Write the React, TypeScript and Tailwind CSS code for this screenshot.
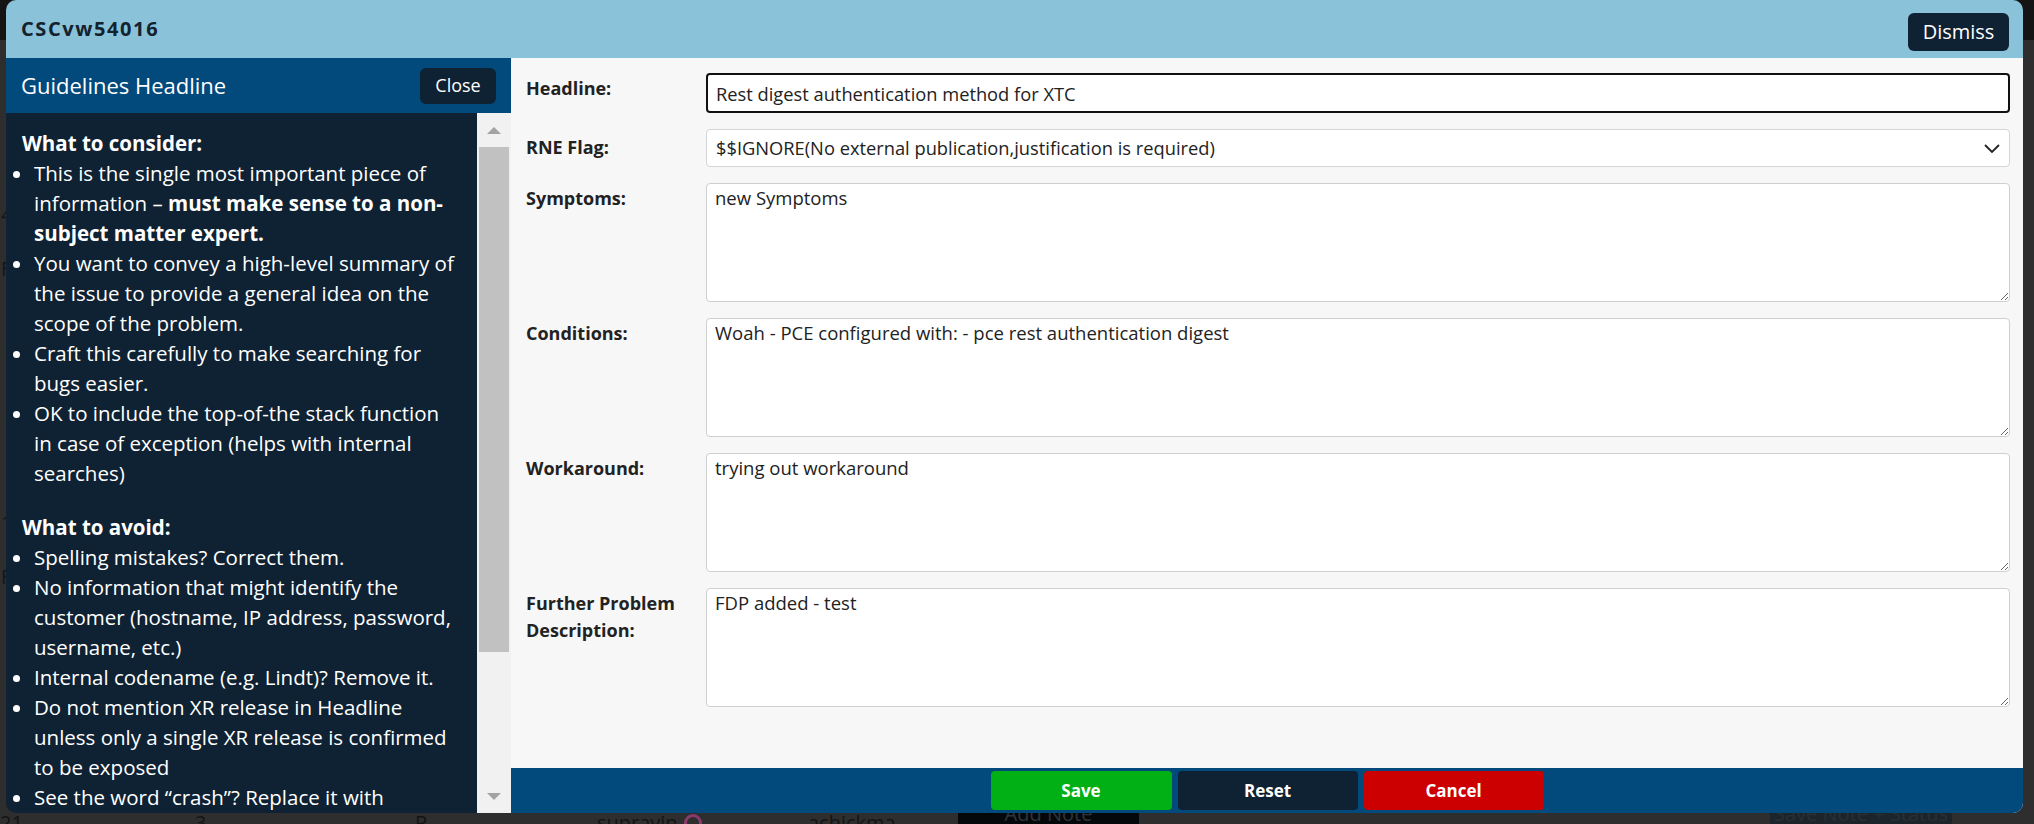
const font = "font-['Open_Sans','Noto_Sans',sans-serif]";

function ScrollArrow({ up }: { up?: boolean }) {
  return (
    <svg width="16" height="9" viewBox="0 0 16 9">
      {up ? <polygon points="8,1 15,8 1,8" fill="#a3a3a3" /> : <polygon points="1,1 15,1 8,8" fill="#a3a3a3" />}
    </svg>
  );
}

function Field({ label, children, pt = "pt-[2px]" }: { label: React.ReactNode; children: React.ReactNode; pt?: string }) {
  return (
    <div className="flex items-start">
      <div className={`w-[180px] shrink-0 text-[18px] leading-[27px] font-bold text-[#222] ${pt}`}>{label}</div>
      <div className="flex-1">{children}</div>
    </div>
  );
}

function Area({ value }: { value: string }) {
  return (
    <textarea
      defaultValue={value}
      className="block w-full h-[119px] bg-white border border-[#cfcfcf] rounded-[4px] px-[8px] py-[2px] text-[18.5px] leading-[24px] text-[#222] outline-none"
    />
  );
}

export default function App() {
  return (
    <div className={`relative w-[2034px] h-[824px] overflow-hidden bg-[#2e2e2e] ${font}`}>
      {/* page behind the overlay */}
      <div className="flex flex-col h-full text-[20px] text-[#151515]">
        <div className="h-[40px] bg-[#141414]" />
        <div className="flex-1 flex flex-col gap-[24px] pt-[160px] pl-[1px]">
          <span>4</span>
          <span>Fi</span>
          <span className="pt-[200px]">1</span>
          <span>Fi</span>
        </div>
        <div className="h-[11px] flex items-start text-[20px] leading-[22px] text-[#141414]">
          <span className="w-[195px] -mt-[1px]">21</span>
          <span className="w-[220px] -mt-[1px]">3</span>
          <span className="w-[182px] -mt-[1px]">P</span>
          <span className="w-[211px] -mt-[1px] flex items-start gap-[6px]">
            <span>supravin</span>
            <span className="inline-block w-[18px] h-[18px] mt-[2px] rounded-full border-[3px] border-[#8a3a6a]" />
          </span>
          <span className="w-[150px] -mt-[1px]">achickma</span>
          <span className="w-[181px] h-[11px] bg-[#05080b] text-[#2f3438] text-center overflow-hidden">
            <span className="block -mt-[10px]">Add Note</span>
          </span>
          <span className="w-[631px]" />
          <span className="w-[182px] h-[11px] bg-[#1c252c] text-[#2a2f33] text-center overflow-hidden">
            <span className="block -mt-[10px]">Save Note + Status</span>
          </span>
        </div>
      </div>

      {/* modal */}
      <div className="absolute left-[6px] top-0 w-[2017px] h-[813px] rounded-[10px] overflow-hidden flex flex-col">
        <div className="h-[58px] bg-[#89c2d9] flex items-center justify-between pl-[15px] pr-[14px]">
          <span className="text-[20px] font-bold tracking-[1.6px] text-[#14222e]">CSCvw54016</span>
          <button className="w-[101px] h-[38px] mt-[5px] rounded-[6px] bg-[#0f2233] text-white text-[20px]">Dismiss</button>
        </div>

        <div className="flex-1 flex min-h-0">
          {/* guidelines */}
          <div className="w-[505px] flex flex-col">
            <div className="h-[55px] bg-[#02497c] flex items-center justify-between pl-[15px] pr-[15px]">
              <span className="text-[22px] text-white">Guidelines Headline</span>
              <button className="w-[76px] h-[36px] rounded-[6px] bg-[#0f2233] text-white text-[18px]">Close</button>
            </div>
            <div className="flex-1 flex min-h-0">
              <div className="flex-1 bg-[#0f2233] text-white text-[20.5px] leading-[30px] pl-[16px] pt-[15px] overflow-hidden whitespace-nowrap">
                <div className="font-bold">What to consider:</div>
                <ul className="list-disc pl-[14px] -ml-[2px]">
                  <li>
                    This is the single most important piece of
                    <br />
                    information – <b>must make sense to a non-</b>
                    <br />
                    <b>subject matter expert.</b>
                  </li>
                  <li>
                    You want to convey a high-level summary of
                    <br />
                    the issue to provide a general idea on the
                    <br />
                    scope of the problem.
                  </li>
                  <li>
                    Craft this carefully to make searching for
                    <br />
                    bugs easier.
                  </li>
                  <li>
                    OK to include the top-of-the stack function
                    <br />
                    in case of exception (helps with internal
                    <br />
                    searches)
                  </li>
                </ul>
                <div className="font-bold mt-[24px]">What to avoid:</div>
                <ul className="list-disc pl-[14px] -ml-[2px]">
                  <li>Spelling mistakes? Correct them.</li>
                  <li>
                    No information that might identify the
                    <br />
                    customer (hostname, IP address, password,
                    <br />
                    username, etc.)
                  </li>
                  <li>Internal codename (e.g. Lindt)? Remove it.</li>
                  <li>
                    Do not mention XR release in Headline
                    <br />
                    unless only a single XR release is confirmed
                    <br />
                    to be exposed
                  </li>
                  <li>
                    See the word “crash”? Replace it with
                    <br />
                    something more specific.
                  </li>
                </ul>
              </div>
              <div className="w-[34px] bg-[#f1f1f1] flex flex-col items-center">
                <div className="h-[34px] flex items-center justify-center">
                  <ScrollArrow up />
                </div>
                <div className="w-[30px] h-[505px] bg-[#c1c1c1]" />
                <div className="flex-1" />
                <div className="h-[34px] flex items-center justify-center">
                  <ScrollArrow />
                </div>
              </div>
            </div>
          </div>

          {/* form */}
          <div className="flex-1 flex flex-col bg-[#f7f7f7]">
            <div className="flex-1 flex flex-col gap-[16px] pl-[15px] pr-[13px] pt-[15px]">
              <Field label="Headline:">
                <input
                  defaultValue="Rest digest authentication method for XTC"
                  className="block w-full h-[40px] bg-white border-2 border-[#111] rounded-[4px] px-[8px] text-[18.3px] text-[#222] outline-none"
                />
              </Field>
              <Field label="RNE Flag:" pt="pt-[5px]">
                <div className="relative">
                  <select
                    defaultValue="ignore"
                    className="block w-full h-[38px] appearance-none bg-white border border-[#d4d4d4] rounded-[4px] px-[9px] text-[18.3px] text-[#222] outline-none"
                  >
                    <option value="ignore">$$IGNORE(No external publication,justification is required)</option>
                  </select>
                  <svg className="absolute right-[9px] top-[11px] pointer-events-none" width="18" height="16" viewBox="0 0 18 16">
                    <polyline points="2,5 9,12 16,5" fill="none" stroke="#222" strokeWidth="1.8" />
                  </svg>
                </div>
              </Field>
              <Field label="Symptoms:">
                <Area value="new Symptoms" />
              </Field>
              <Field label="Conditions:">
                <Area value="Woah - PCE configured with: - pce rest authentication digest" />
              </Field>
              <Field label="Workaround:">
                <Area value="trying out workaround" />
              </Field>
              <Field
                label={
                  <>
                    Further Problem
                    <br />
                    Description:
                  </>
                }
              >
                <Area value="FDP added - test" />
              </Field>
            </div>
            <div className="h-[45px] bg-[#02497c] flex items-center justify-center gap-[6px]">
              <button className="w-[181px] h-[39px] rounded-[4px] bg-[#00b015] text-white text-[17px] font-bold">Save</button>
              <button className="w-[180px] h-[39px] rounded-[4px] bg-[#0f2233] text-white text-[17px] font-bold">Reset</button>
              <button className="w-[180px] h-[39px] rounded-[4px] bg-[#cc0000] text-white text-[17px] font-bold">Cancel</button>
            </div>
          </div>
        </div>
      </div>
    </div>
  );
}
